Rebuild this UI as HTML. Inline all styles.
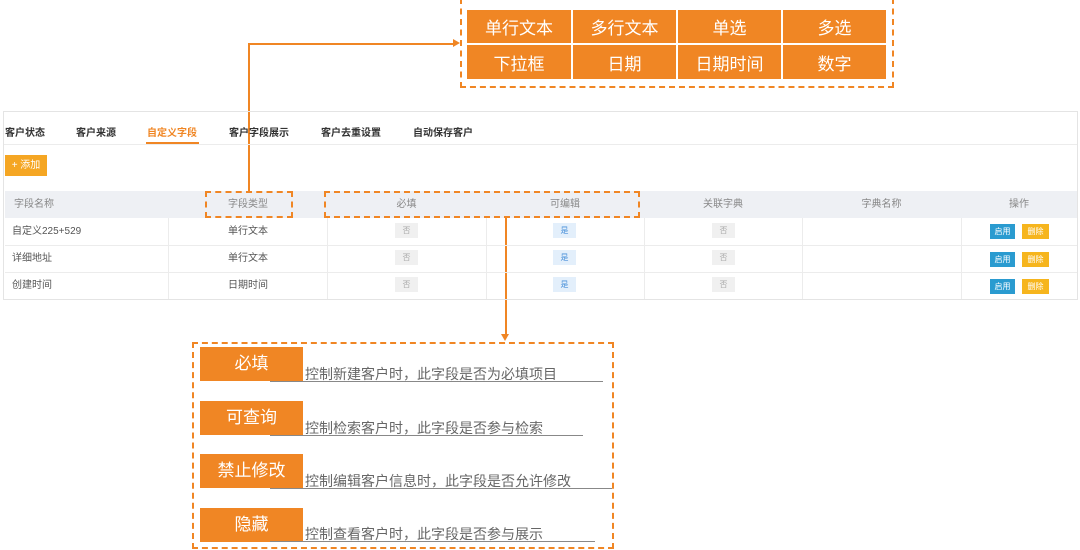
<!DOCTYPE html>
<html><head><meta charset="utf-8"><style>
*{margin:0;padding:0;box-sizing:border-box}
body{width:1080px;height:550px;background:#fff;position:relative;overflow:hidden;font-family:"Liberation Sans","Noto Sans CJK SC",sans-serif}
.a{position:absolute}
.cell{position:absolute;background:#f08624;color:#fff;font-size:17px;display:flex;align-items:center;justify-content:center}
.dash{position:absolute;border:2px dashed #f08624}
.tab{position:absolute;top:124px;font-size:10px;font-weight:bold;color:#333}
.th{position:absolute;top:191px;height:27px;line-height:27px;font-size:10px;color:#888;text-align:center}
.td{position:absolute;font-size:10px;color:#555;text-align:center;height:27px;line-height:27px}
.b{position:absolute;width:23px;height:15px;font-size:8px;line-height:15px;text-align:center}
.no{background:#f0f0f0;color:#aaa}
.yes{background:#e3effb;color:#4a90d9}
.en{background:#2a9bd0;color:#fff;width:25px}
.de{background:#f6b51d;color:#fff;width:27px}
.lab{position:absolute;left:200px;width:103px;height:34px;background:#f08624;color:#fff;font-size:17px;display:flex;align-items:center;justify-content:center;padding-bottom:6px}
.desc{position:absolute;left:305px;font-size:14px;color:#666;white-space:nowrap}
.ul{position:absolute;height:1px;background:#888}
</style></head><body>
<div class="dash" style="left:460px;top:-2px;width:434px;height:90px"></div>
<div class="cell" style="left:467px;top:10px;width:104px;height:33px">单行文本</div>
<div class="cell" style="left:573px;top:10px;width:103px;height:33px">多行文本</div>
<div class="cell" style="left:678px;top:10px;width:103px;height:33px">单选</div>
<div class="cell" style="left:783px;top:10px;width:103px;height:33px">多选</div>
<div class="cell" style="left:467px;top:45px;width:104px;height:34px">下拉框</div>
<div class="cell" style="left:573px;top:45px;width:103px;height:34px">日期</div>
<div class="cell" style="left:678px;top:45px;width:103px;height:34px">日期时间</div>
<div class="cell" style="left:783px;top:45px;width:103px;height:34px">数字</div>
<div class="a" style="left:248px;top:43px;width:206px;height:1.5px;background:#f08624"></div>
<div class="a" style="left:453px;top:39px;border-left:7px solid #f08624;border-top:4.5px solid transparent;border-bottom:4.5px solid transparent"></div>
<div class="a" style="left:248px;top:43px;width:1.5px;height:148px;background:#f08624"></div>
<div class="a" style="left:505px;top:218px;width:1.5px;height:118px;background:#f08624"></div>
<div class="a" style="left:501px;top:334px;border-top:7px solid #f08624;border-left:4.5px solid transparent;border-right:4.5px solid transparent"></div>
<div class="a" style="left:3px;top:111px;width:1075px;height:189px;border:1px solid #e4e4e4"></div>
<div class="a" style="left:4px;top:144px;width:1073px;height:1px;background:#ececec"></div>
<div class="tab" style="left:5px">客户状态</div>
<div class="tab" style="left:76px">客户来源</div>
<div class="tab" style="left:147px;color:#f08624">自定义字段</div>
<div class="a" style="left:146px;top:142px;width:53px;height:2px;background:#f08624"></div>
<div class="tab" style="left:229px">客户字段展示</div>
<div class="tab" style="left:321px">客户去重设置</div>
<div class="tab" style="left:413px">自动保存客户</div>
<div class="a" style="left:5px;top:155px;width:42px;height:21px;background:#f5a623;color:#fff;font-size:10px;line-height:21px;text-align:center">+ 添加</div>
<div class="a" style="left:5px;top:191px;width:1072px;height:27px;background:#eef0f4"></div>
<div class="th" style="left:14px;text-align:left">字段名称</div>
<div class="th" style="left:169px;width:158px">字段类型</div>
<div class="th" style="left:327px;width:159px">必填</div>
<div class="th" style="left:486px;width:158px">可编辑</div>
<div class="th" style="left:644px;width:158px">关联字典</div>
<div class="th" style="left:802px;width:159px">字典名称</div>
<div class="th" style="left:961px;width:116px">操作</div>
<div class="a" style="left:5px;top:245px;width:1072px;height:1px;background:#ececec"></div>
<div class="a" style="left:5px;top:272px;width:1072px;height:1px;background:#ececec"></div>
<div class="a" style="left:168px;top:218px;width:1px;height:81px;background:#ececec"></div>
<div class="a" style="left:327px;top:218px;width:1px;height:81px;background:#ececec"></div>
<div class="a" style="left:486px;top:218px;width:1px;height:81px;background:#ececec"></div>
<div class="a" style="left:644px;top:218px;width:1px;height:81px;background:#ececec"></div>
<div class="a" style="left:802px;top:218px;width:1px;height:81px;background:#ececec"></div>
<div class="a" style="left:961px;top:218px;width:1px;height:81px;background:#ececec"></div>
<div class="td" style="left:12px;top:218px;text-align:left">自定义225+529</div>
<div class="td" style="left:12px;top:245px;text-align:left">详细地址</div>
<div class="td" style="left:12px;top:272px;text-align:left">创建时间</div>
<div class="td" style="left:169px;width:158px;top:218px">单行文本</div>
<div class="td" style="left:169px;width:158px;top:245px">单行文本</div>
<div class="td" style="left:169px;width:158px;top:272px">日期时间</div>
<div class="b no" style="left:395px;top:223px">否</div>
<div class="b no" style="left:395px;top:250px">否</div>
<div class="b no" style="left:395px;top:277px">否</div>
<div class="b yes" style="left:553px;top:223px">是</div>
<div class="b yes" style="left:553px;top:250px">是</div>
<div class="b yes" style="left:553px;top:277px">是</div>
<div class="b no" style="left:712px;top:223px">否</div>
<div class="b no" style="left:712px;top:250px">否</div>
<div class="b no" style="left:712px;top:277px">否</div>
<div class="b en" style="left:990px;top:224px">启用</div>
<div class="b de" style="left:1022px;top:224px">删除</div>
<div class="b en" style="left:990px;top:252px">启用</div>
<div class="b de" style="left:1022px;top:252px">删除</div>
<div class="b en" style="left:990px;top:279px">启用</div>
<div class="b de" style="left:1022px;top:279px">删除</div>
<div class="dash" style="left:205px;top:191px;width:88px;height:27px"></div>
<div class="dash" style="left:324px;top:191px;width:316px;height:27px"></div>
<div class="dash" style="left:192px;top:342px;width:422px;height:207px"></div>
<div class="lab" style="top:347px">必填</div>
<div class="lab" style="top:401px">可查询</div>
<div class="lab" style="top:454px">禁止修改</div>
<div class="lab" style="top:508px">隐藏</div>
<div class="desc" style="top:364px">控制新建客户时，此字段是否为必填项目</div>
<div class="desc" style="top:418px">控制检索客户时，此字段是否参与检索</div>
<div class="desc" style="top:471px">控制编辑客户信息时，此字段是否允许修改</div>
<div class="desc" style="top:524px">控制查看客户时，此字段是否参与展示</div>
<div class="ul" style="left:270px;top:381px;width:333px"></div>
<div class="ul" style="left:270px;top:435px;width:313px"></div>
<div class="ul" style="left:270px;top:488px;width:342px"></div>
<div class="ul" style="left:270px;top:541px;width:325px"></div>
</body></html>
